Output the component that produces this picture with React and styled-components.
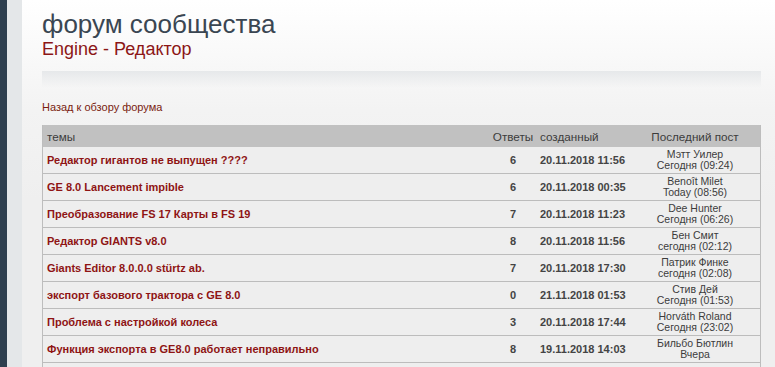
import React from "react";
import styled, { createGlobalStyle } from "styled-components";

const Global = createGlobalStyle`
  html, body { margin: 0; padding: 0; }
  body { font-family: "Liberation Sans", Arial, sans-serif; background: #ececec; }
`;

const Page = styled.div`
  display: flex;
  min-height: 367px;
`;

const Rail = styled.div`
  width: 7px;
  flex: none;
  background: #2e3f4f;
`;

const Gutter = styled.div`
  width: 15px;
  flex: none;
  background: #e4e7e9;
`;

const Main = styled.main`
  flex: 1;
  padding: 8px 14px 0 20px;
  background: linear-gradient(to bottom, #ffffff 0px, #f3f3f3 110px, #efefef 200px);
`;

const Title = styled.h1`
  margin: 0;
  font-size: 26px;
  line-height: 32px;
  font-weight: normal;
  color: #3a4652;
`;

const Subtitle = styled.h2`
  margin: -1px 0 0;
  font-size: 18px;
  line-height: 20px;
  font-weight: normal;
  color: #8c1616;
`;

const Band = styled.div`
  margin-top: 12px;
  height: 17px;
  background: linear-gradient(to bottom, #e6e8ea, rgba(239, 239, 239, 0));
`;

const BackLink = styled.a`
  display: block;
  margin-top: 12px;
  font-size: 11px;
  line-height: 14px;
  color: #7a1c10;
  text-decoration: none;
`;

const Table = styled.div`
  margin-top: 11px;
  border-left: 1px solid #bdbdbd;
  border-right: 1px solid #bdbdbd;
`;

const Row = styled.div`
  display: grid;
  grid-template-columns: 1fr 46px 94px 130px;
  align-items: center;
  height: ${(p) => (p.$head ? "22px" : "26px")};
  background: ${(p) => (p.$head ? "#c1c1c1" : "#eeeeee")};
  border-bottom: ${(p) => (p.$head ? "none" : "1px solid #bcbcbc")};
  color: #333;
  font-size: 11px;
`;

const Topic = styled.div`
  padding-left: 4px;
  font-weight: bold;
  color: #8e1414;
  white-space: nowrap;
`;

const HeadCell = styled.div`
  padding-left: ${(p) => (p.$left ? "4px" : "0")};
  text-align: ${(p) => (p.$center ? "center" : "left")};
  color: #3c3c3c;
  font-size: 11.7px;
`;

const Num = styled.div`
  text-align: center;
  font-weight: bold;
  color: #444;
`;

const Date = styled.div`
  padding-left: 4px;
  font-weight: bold;
  color: #444;
`;

const Last = styled.div`
  text-align: center;
  font-size: 10.5px;
  line-height: 11px;
  color: #3c3c3c;
`;

const rows = [
  ["Редактор гигантов не выпущен ????", "6", "20.11.2018 11:56", "Мэтт Уилер", "Сегодня (09:24)"],
  ["GE 8.0 Lancement impible", "6", "20.11.2018 00:35", "Benoît Milet", "Today (08:56)"],
  ["Преобразование FS 17 Карты в FS 19", "7", "20.11.2018 11:23", "Dee Hunter", "Сегодня (06:26)"],
  ["Редактор GIANTS v8.0", "8", "20.11.2018 11:56", "Бен Смит", "сегодня (02:12)"],
  ["Giants Editor 8.0.0.0 stürtz ab.", "7", "20.11.2018 17:30", "Патрик Финке", "сегодня (02:08)"],
  ["экспорт базового трактора с GE 8.0", "0", "21.11.2018 01:53", "Стив Дей", "Сегодня (01:53)"],
  ["Проблема с настройкой колеса", "3", "20.11.2018 17:44", "Horváth Roland", "Сегодня (23:02)"],
  ["Функция экспорта в GE8.0 работает неправильно", "8", "19.11.2018 14:03", "Бильбо Бютлин", "Вчера"],
  ["", "", "", "", ""],
];

export default function App() {
  return (
    <>
      <Global />
      <Page>
        <Rail />
        <Gutter />
        <Main>
          <Title>форум сообщества</Title>
          <Subtitle>Engine - Редактор</Subtitle>
          <Band />
          <BackLink href="#">Назад к обзору форума</BackLink>
          <Table>
            <Row $head>
              <HeadCell $left>темы</HeadCell>
              <HeadCell $center>Ответы</HeadCell>
              <HeadCell $left>созданный</HeadCell>
              <HeadCell $center>Последний пост</HeadCell>
            </Row>
            {rows.map((r, i) => (
              <Row key={i}>
                <Topic>{r[0]}</Topic>
                <Num>{r[1]}</Num>
                <Date>{r[2]}</Date>
                <Last>
                  {r[3]}
                  <br />
                  {r[4]}
                </Last>
              </Row>
            ))}
          </Table>
        </Main>
      </Page>
    </>
  );
}
